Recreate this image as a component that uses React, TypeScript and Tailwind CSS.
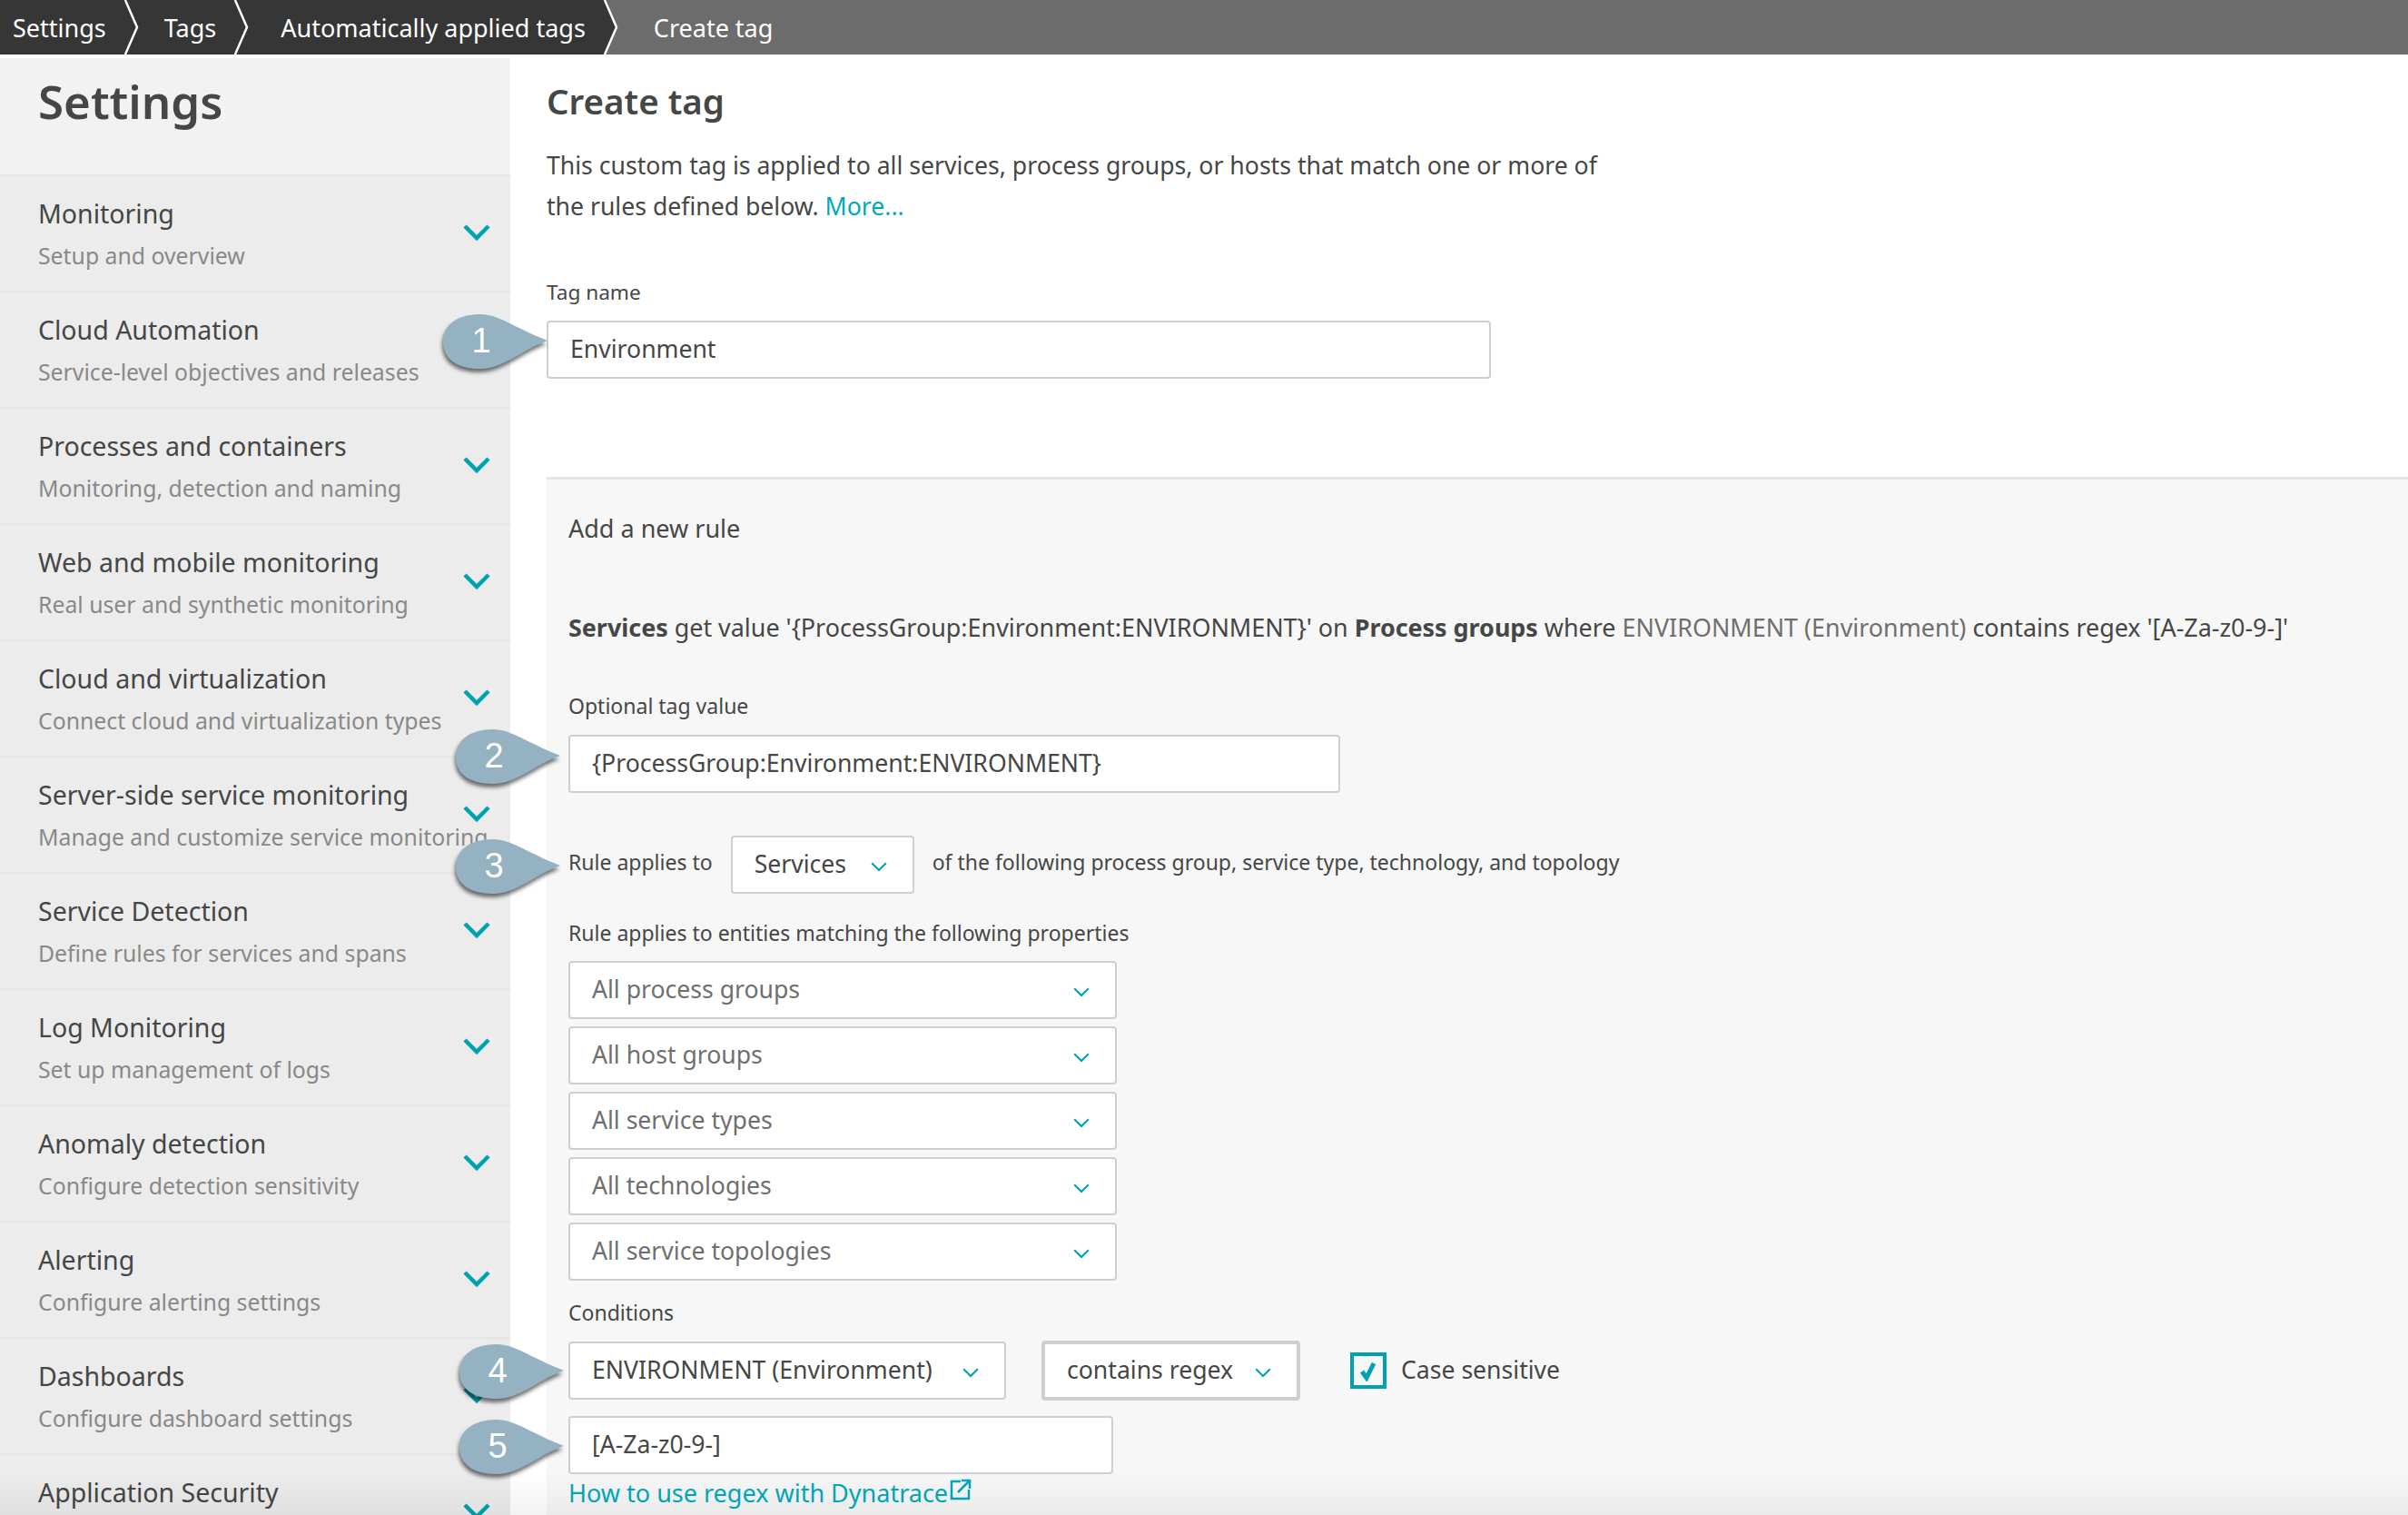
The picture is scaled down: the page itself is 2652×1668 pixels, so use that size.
import React from "react";

const font = { fontFamily: '"Noto Sans", sans-serif' };

const navItems = [
  ["Monitoring", "Setup and overview", true],
  ["Cloud Automation", "Service-level objectives and releases", false],
  ["Processes and containers", "Monitoring, detection and naming", true],
  ["Web and mobile monitoring", "Real user and synthetic monitoring", true],
  ["Cloud and virtualization", "Connect cloud and virtualization types", true],
  ["Server-side service monitoring", "Manage and customize service monitoring", true],
  ["Service Detection", "Define rules for services and spans", true],
  ["Log Monitoring", "Set up management of logs", true],
  ["Anomaly detection", "Configure detection sensitivity", true],
  ["Alerting", "Configure alerting settings", true],
  ["Dashboards", "Configure dashboard settings", true],
  ["Application Security", "", true],
] as const;

function Chevron({ size = 30, width = 4.5 }: { size?: number; width?: number }) {
  return (
    <svg width={size} height={size * 0.6} viewBox="0 0 30 18" fill="none" className="shrink-0">
      <path d="M2 2 L15 15 L28 2" stroke="#00a1b2" strokeWidth={width} />
    </svg>
  );
}

function Crumb({ label, last, dark }: { label: string; last?: boolean; dark?: boolean }) {
  return (
    <div className={`relative flex h-[60px] items-center ${last ? "pl-[29px]" : ""}`}>
      <span className="text-[27px] leading-none text-white">{label}</span>
      {!last && (
        <svg width="26" height="60" viewBox="0 0 26 60" className="ml-[20px] shrink-0" fill="none">
          <path d="M0 -2 L14 30 L0 62 L26 62 L26 -2 Z" fill={dark ? "#6c6c6c" : "#363636"} />
          <path d="M0 -2 L14 30 L0 62" stroke="#fff" strokeWidth="2.5" />
        </svg>
      )}
    </div>
  );
}

function Bubble({ n, className }: { n: number; className: string }) {
  return (
    <div className={`absolute h-[64px] w-[120px] ${className}`}>
      <svg width="120" height="64" viewBox="0 0 120 64" className="absolute inset-0 drop-shadow-[-1px_4px_2px_rgba(0,0,0,0.55)]">
        <path d="M42 1 C62 1 80 16 116 30 C88 40 68 61 42 61 C16 61 1 50 1 31 C1 12 18 1 42 1 Z" fill="#94b2c1" />
      </svg>
      <span className="absolute left-[28px] top-[8px] w-[30px] text-center text-[38px] leading-[44px] text-white [font-family:'Liberation_Sans',sans-serif]">{n}</span>
    </div>
  );
}

function Field({ children, className = "", muted }: { children: React.ReactNode; className?: string; muted?: boolean }) {
  return (
    <div className={`flex h-[64px] items-center rounded-[4px] border-2 border-[#cfcfcf] bg-white pl-[24px] pr-[28px] text-[26.6px] ${muted ? "text-[#6f6f6f]" : "text-[#454646]"} ${className}`}>
      {children}
    </div>
  );
}

function Select({ label, className = "", muted }: { label: string; className?: string; muted?: boolean }) {
  return (
    <Field muted={muted} className={`justify-between ${className}`}>
      <span className="whitespace-nowrap">{label}</span>
      <span className="mt-[5px] flex">
        <Chevron size={18} width={3.5} />
      </span>
    </Field>
  );
}

export default function App() {
  return (
    <div style={font} className="relative h-[1668px] w-[2652px] overflow-hidden bg-white text-[#454646]">
      <header className="flex h-[60px] bg-[#6c6c6c]">
        <div className="flex bg-[#363636] pl-[14px]">
          <Crumb label="Settings" />
          <div className="w-[18px]" />
          <Crumb label="Tags" />
          <div className="w-[25px]" />
          <Crumb label="Automatically applied tags" dark />
        </div>
        <Crumb label="Create tag" last />
      </header>

      <div className="flex h-[1608px]">
        <aside className="mt-[4px] w-[562px] shrink-0 overflow-hidden bg-[#ececec]">
          <div className="h-[128px] bg-[#f2f2f2] pl-[42px] pt-[12px]">
            <h1 className="text-[51px] font-semibold leading-[70px] text-[#454646]">Settings</h1>
          </div>
          {navItems.map(([title, sub, chev]) => (
            <div key={title} className="relative h-[128px] border-t-[3px] border-[#e6e6e6] pl-[42px] pt-[20px]">
              <div className="whitespace-nowrap text-[28.5px] leading-[40px] text-[#454646]">{title}</div>
              <div className="mt-[9px] whitespace-nowrap text-[24.8px] leading-[34px] text-[#898989]">{sub}</div>
              {chev && (
                <div className="absolute left-[510px] top-[52px]">
                  <Chevron />
                </div>
              )}
            </div>
          ))}
        </aside>

        <main className="ml-[40px] flex-1">
          <h2 className="mt-[26px] text-[38.5px] font-semibold leading-[50px] text-[#454646]">Create tag</h2>
          <p className="mt-[24px] w-[1180px] text-[26.6px] leading-[45px]">
            This custom tag is applied to all services, process groups, or hosts that match one or more of the rules defined below. <span className="text-[#00a9bd]">More...</span>
          </p>
          <div className="mt-[55px] text-[22.6px] leading-[34px]">Tag name</div>
          <Field className="mt-[14px] w-[1040px]">Environment</Field>

          <section className="mt-[108px] h-[1200px] border-t-[3px] border-[#e6e6e6] bg-[#f7f7f7] pl-[24px] pt-[34px]">
            <div className="text-[27px] leading-[40px]">Add a new rule</div>
            <div className="mt-[69px] whitespace-nowrap text-[26.9px] leading-[40px]">
              <b className="font-bold">Services</b> get value '{"{ProcessGroup:Environment:ENVIRONMENT}"}' on <b className="font-bold">Process groups</b> where <span className="text-[#6f6f6f]">ENVIRONMENT (Environment)</span> contains regex '[A-Za-z0-9-]'
            </div>
            <div className="mt-[49px] text-[23px] leading-[34px]">Optional tag value</div>
            <Field className="mt-[15px] w-[850px]">{"{ProcessGroup:Environment:ENVIRONMENT}"}</Field>
            <div className="mt-[47px] flex items-center whitespace-nowrap text-[23px]">
              <span className="pb-[6px]">Rule applies to</span>
              <Select label="Services" className="ml-[20px] w-[202px]" />
              <span className="ml-[20px] pb-[6px]">of the following process group, service type, technology, and topology</span>
            </div>
            <div className="mt-[26px] text-[23px] leading-[34px]">Rule applies to entities matching the following properties</div>
            <div className="mt-[14px] flex w-[604px] flex-col gap-[8px]">
              <Select muted label="All process groups" />
              <Select muted label="All host groups" />
              <Select muted label="All service types" />
              <Select muted label="All technologies" />
              <Select muted label="All service topologies" />
            </div>
            <div className="mt-[18px] text-[23px] leading-[34px]">Conditions</div>
            <div className="mt-[14px] flex items-center">
              <Select label="ENVIRONMENT (Environment)" className="w-[482px]" />
              <Select label="contains regex" className="ml-[39px] h-[66px] w-[285px] border-[4px]" />
              <div className="ml-[55px] flex h-[40px] w-[40px] items-center justify-center border-[4px] border-[#00a1b2]">
                <svg width="24" height="24" viewBox="0 0 24 24" fill="none">
                  <path d="M5 13 L10 20 L18 4" stroke="#00a1b2" strokeWidth="5" />
                </svg>
              </div>
              <span className="ml-[16px] text-[26.6px]">Case sensitive</span>
            </div>
            <Field className="mt-[17px] w-[600px]">[A-Za-z0-9-]</Field>
            <div className="mt-[1px] flex items-start text-[27px] leading-[40px] text-[#00a9bd]">
              How to use regex with Dynatrace
              <svg width="24" height="24" viewBox="0 0 24 24" fill="none" className="mt-[4px] ml-[2px]" stroke="#00a9bd" strokeWidth="2.5">
                <path d="M12 3 H2 V22 H21 V12" />
                <path d="M9 15 L21 3 M13 2 H22 V11" />
              </svg>
            </div>
          </section>
        </main>
      </div>

      <Bubble n={1} className="left-[487px] top-[345px]" />
      <Bubble n={2} className="left-[501px] top-[802px]" />
      <Bubble n={3} className="left-[501px] top-[923px]" />
      <Bubble n={4} className="left-[505px] top-[1479px]" />
      <Bubble n={5} className="left-[505px] top-[1562px]" />
      <div className="pointer-events-none absolute inset-x-0 bottom-0 h-[48px] bg-gradient-to-b from-transparent to-black/5" />
    </div>
  );
}
